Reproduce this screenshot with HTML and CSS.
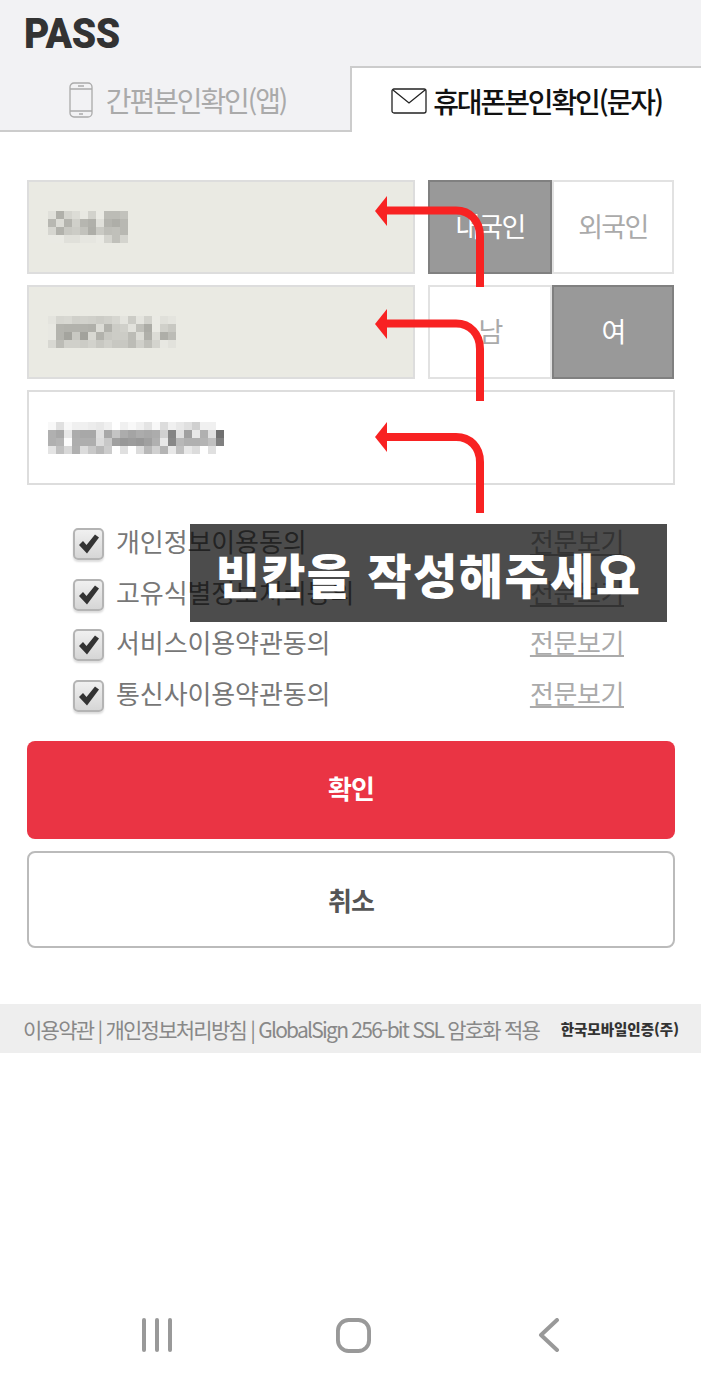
FILE: index.html
```html
<!DOCTYPE html>
<html lang="ko">
<head>
    <meta charset="UTF-8">
    <title>PASS 휴대폰본인확인</title>
    <link rel="stylesheet" href="styles.css">
</head>
<body>
    <div class="page">
        <header class="top">
            <div class="logo">PASS</div>
        </header>

        <nav class="tabs">
            <div class="tab tab-off">
                <svg class="tab-icon" width="24" height="36" viewBox="0 0 24 36" fill="none" stroke="#aaa" stroke-width="1.3">
                    <rect x="1" y="1" width="22" height="34" rx="4"/>
                    <path d="M1 7H23M1 29H23M9 4H15M10 32H14"/>
                </svg>
                <span>간편본인확인(앱)</span>
            </div>
            <div class="tab tab-on">
                <svg class="tab-icon" width="36" height="26" viewBox="0 0 36 26" fill="none" stroke="#222" stroke-width="1.3">
                    <rect x="1" y="1" width="34" height="24" rx="2"/>
                    <path d="M2 2L18 15L34 2"/>
                </svg>
                <span>휴대폰본인확인(문자)</span>
            </div>
        </nav>

        <main class="form">
            <div class="row">
                <div class="field field-locked"><div class="mosaic" data-tone="locked" data-rows="e0b0d4dce8d2eabcbcc2 b8dcb4d0b6b0e0b4aeb8 d6b2c8ccc2aecabec0b8 eaeae0e0e6e6ead4c0d4"></div></div>
                <div class="toggle">
                    <div class="toggle-item is-on">내국인</div>
                    <div class="toggle-item">외국인</div>
                </div>
            </div>
            <div class="row">
                <div class="field field-locked"><div class="mosaic" data-tone="locked" data-rows="e4d6d8d0d2d0ccd0d6e4cce4d2eae0e4 e8b4b2b2b2b0dcb2ccd0e2c0acead0c8 e8b4a4c8a2d8b2c8ccccbcdcb0dcaebc d8bcd0d0ccd2c8d0c8c8bcd0c0d4e8e2"></div></div>
                <div class="toggle">
                    <div class="toggle-item">남</div>
                    <div class="toggle-item is-on">여</div>
                </div>
            </div>
            <div class="field field-wide"><div class="mosaic" data-tone="plain" data-rows="f8e0f8f0f0ece8f0fff0f8f0e4f8dcf0e8e0d0f0f0ff b0a8e8aca8a8e0a8c4aca4aca8acd084e0a0e8b0e070 b0b4fcaeaeaedcc8a0989c98a0b0e888b8b0b0b4c080 e4c0d8b0dcc8b8ccffe0ffdcb8d0b4e8c0e8dcffe0ff"></div></div>

            <ul class="agree">
                <li class="agree-row">
                    <span class="check"><svg width="22" height="20" viewBox="0 0 22 20"><path d="M1 11L5 7L8.5 11L17 0.5L21 3.5L9 19.5Z" fill="#333"/></svg></span>
                    <span class="agree-label">개인정보이용동의</span>
                    <a class="agree-link">전문보기</a>
                </li>
                <li class="agree-row">
                    <span class="check"><svg width="22" height="20" viewBox="0 0 22 20"><path d="M1 11L5 7L8.5 11L17 0.5L21 3.5L9 19.5Z" fill="#333"/></svg></span>
                    <span class="agree-label">고유식별정보처리동의</span>
                    <a class="agree-link">전문보기</a>
                </li>
                <li class="agree-row">
                    <span class="check"><svg width="22" height="20" viewBox="0 0 22 20"><path d="M1 11L5 7L8.5 11L17 0.5L21 3.5L9 19.5Z" fill="#333"/></svg></span>
                    <span class="agree-label">서비스이용약관동의</span>
                    <a class="agree-link">전문보기</a>
                </li>
                <li class="agree-row">
                    <span class="check"><svg width="22" height="20" viewBox="0 0 22 20"><path d="M1 11L5 7L8.5 11L17 0.5L21 3.5L9 19.5Z" fill="#333"/></svg></span>
                    <span class="agree-label">통신사이용약관동의</span>
                    <a class="agree-link">전문보기</a>
                </li>
            </ul>

            <button class="btn btn-ok">확인</button>
            <button class="btn btn-cancel">취소</button>
        </main>

        <footer class="foot">
            <span class="foot-links">이용약관 | 개인정보처리방침 | GlobalSign 256-bit SSL 암호화 적용</span>
            <span class="foot-brand">한국모바일인증(주)</span>
        </footer>

        <div class="softkeys">
            <svg width="32" height="34" viewBox="0 0 32 34" fill="none" stroke="#999" stroke-width="4" stroke-linecap="round">
                <path d="M3 2V32M16 2V32M29 2V32"/>
            </svg>
            <svg class="key-home" width="35" height="35" viewBox="0 0 36 36" fill="none" stroke="#999" stroke-width="4">
                <rect x="2" y="2" width="32" height="32" rx="11"/>
            </svg>
            <svg width="22" height="34" viewBox="0 0 22 34" fill="none" stroke="#999" stroke-width="4" stroke-linecap="round" stroke-linejoin="round">
                <path d="M19 2L3 17L19 32"/>
            </svg>
        </div>

        <!-- annotations drawn over the screen -->
        <svg class="arrows" width="701" height="1388" viewBox="0 0 701 1388" fill="none">
            <g stroke="#f82222" stroke-width="8">
                <path d="M385 210.500H456C470 210.500 480 221 480 236V287"/>
                <path d="M385 323.500H456C470 323.500 480 334 480 349V401"/>
                <path d="M385 437H456C470 437 480 447 480 462V513"/>
            </g>
            <g fill="#f82222">
                <path d="M375 211L387 196V226Z"/>
                <path d="M375 324L387 309V339Z"/>
                <path d="M375 437L387 422V452Z"/>
            </g>
        </svg>
        <div class="notice">빈칸을 작성해주세요</div>
    </div>
    <script src="mosaic.js"></script>
</body>
</html>
```

FILE: styles.css
```css
* {
    margin: 0;
    padding: 0;
    box-sizing: border-box;
}

body {
    font-family: 'Noto Sans CJK KR', 'Noto Sans', sans-serif;
    background: #fff;
}

.page {
    position: relative;
    width: 701px;
    height: 1388px;
    overflow: hidden;
    display: flex;
    flex-direction: column;
}

.top {
    height: 67px;
    padding: 10px 0 0 24px;
    background: #f2f2f4;
}

.logo {
    font-family: 'Roboto', sans-serif;
    font-size: 42px;
    font-weight: 900;
    line-height: 48px;
    letter-spacing: -0.5px;
    color: #333;
    transform: scaleX(0.93);
    transform-origin: left;
}

.tabs {
    display: flex;
    height: 65px;
}

.tab {
    display: flex;
    align-items: center;
    justify-content: center;
    padding-top: 2px;
    font-size: 28px;
    letter-spacing: -2.1px;
}

.tab-off {
    width: 350px;
    gap: 13px;
    padding-left: 5px;
    background: #f2f2f4;
    border-bottom: 2px solid #ccc;
    color: #aaa;
}

.tab-on {
    flex: 1;
    gap: 6px;
    margin-top: -1px;
    background: #fff;
    border-top: 2px solid #ccc;
    border-left: 2px solid #ccc;
    font-weight: 500;
    color: #111;
}

.form {
    display: flex;
    flex-direction: column;
    padding: 48px 26px 0 27px;
}

.row {
    display: flex;
    gap: 13px;
    margin-bottom: 11px;
}

.field {
    display: flex;
    align-items: center;
    height: 94px;
    padding-left: 19px;
    border: 2px solid #ddd;
}

.field-locked {
    width: 388px;
    background: #eaeae3;
}

.field-wide {
    height: 95px;
    background: #fff;
}

.mosaic {
    display: grid;
    grid-auto-rows: 8px;
    grid-auto-columns: 8px;
}

.toggle {
    flex: 1;
    display: grid;
    grid-template-columns: 124px 122px;
}

.toggle-item {
    display: flex;
    align-items: center;
    justify-content: center;
    padding-bottom: 4px;
    border: 2px solid #e2e2e2;
    font-size: 27px;
    letter-spacing: -1.6px;
    color: #aaa;
}

.toggle-item.is-on {
    background: #999;
    border-color: #808080;
    color: #fff;
}

.agree {
    list-style: none;
    margin: 34px 51px 20px 46px;
}

.agree-row {
    display: flex;
    align-items: center;
    height: 50.5px;
}

.check {
    display: flex;
    align-items: center;
    justify-content: center;
    width: 31px;
    height: 32px;
    margin-right: 12px;
    border: 2px solid #b4b4b4;
    border-radius: 5px;
    background: linear-gradient(#f0f0f0, #d6d6d6);
    box-shadow: 0 2px 2px #ddd;
}

.agree-label {
    flex: 1;
    padding-bottom: 7px;
    font-size: 26px;
    letter-spacing: -0.1px;
    color: #777;
}

.agree-link {
    padding-bottom: 7px;
    font-size: 26px;
    letter-spacing: -0.4px;
    color: #aaa;
    text-decoration: underline;
    text-underline-offset: 2px;
}

.btn {
    font-family: inherit;
    font-size: 26px;
    font-weight: 700;
    letter-spacing: -1px;
    border-radius: 8px;
}

.btn-ok {
    height: 98px;
    padding-bottom: 5px;
    border: none;
    background: #ea3444;
    color: #fff;
}

.btn-cancel {
    height: 97px;
    margin-top: 12px;
    border: 2px solid #bbb;
    background: #fff;
    color: #555;
}

.foot {
    display: flex;
    align-items: center;
    justify-content: space-between;
    height: 49px;
    margin-top: 56px;
    padding: 0 22px 0 23px;
    background: #eee;
}

.foot-links {
    font-size: 21px;
    letter-spacing: -1.75px;
    color: #888;
}

.foot-brand {
    font-size: 14.5px;
    font-weight: 900;
    color: #333;
}

.softkeys {
    display: flex;
    align-items: center;
    margin-top: auto;
    height: 36px;
    margin-bottom: 35px;
    padding-left: 141px;
}

.key-home {
    margin: 0 167px 0 163px;
}

.arrows {
    position: absolute;
    top: 0;
    left: 0;
}

.notice {
    position: absolute;
    top: 524px;
    left: 190px;
    width: 477px;
    height: 98px;
    display: flex;
    align-items: center;
    justify-content: center;
    background: rgba(0, 0, 0, 0.7);
    font-size: 48px;
    font-weight: 900;
    letter-spacing: 1.5px;
    color: #fff;
}
```

FILE: mosaic.js
```js
// Rebuild the pixelated (masked) values from grey levels
var TINTS = { locked: -6, plain: 0 };

document.querySelectorAll('.mosaic').forEach(function (box) {
    var tint = TINTS[box.dataset.tone];
    box.dataset.rows.split(' ').forEach(function (row, y) {
        for (var x = 0; x < row.length / 2; x++) {
            var grey = parseInt(row.substr(x * 2, 2), 16);
            var cell = document.createElement('span');
            cell.style.gridArea = (y + 1) + ' / ' + (x + 1);
            cell.style.background = 'rgb(' + grey + ',' + grey + ',' + (grey + tint) + ')';
            box.appendChild(cell);
        }
    });
});
```
